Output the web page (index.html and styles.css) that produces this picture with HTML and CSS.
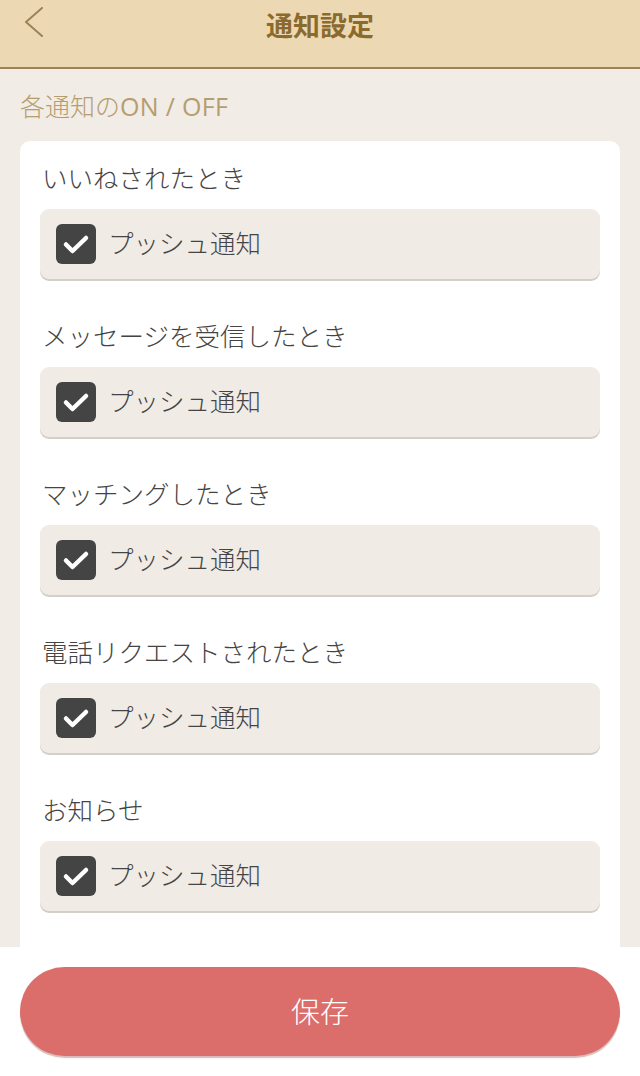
FILE: index.html
```html
<!DOCTYPE html>
<html lang="ja">
<head>
<meta charset="utf-8">
<title>通知設定</title>
<link rel="stylesheet" href="styles.css">
</head>
<body>
<div class="app">
  <header class="header">
    <button class="back" aria-label="戻る">
      <svg width="20" height="30" viewBox="0 0 20 30"><path d="M18 1 L2 15 L18 29" fill="none" stroke="#9a8259" stroke-width="2" stroke-linecap="round" stroke-linejoin="round"/></svg>
    </button>
    <h1 class="title">通知設定</h1>
  </header>
  <main class="main">
    <div class="caption">各通知の<span class="latin">ON / OFF</span></div>
    <div class="card">
      <section class="group">
        <div class="group-label">いいねされたとき</div>
        <label class="row"><span class="check"><svg width="40" height="40" viewBox="0 0 40 40"><path d="M10 20.5 L16.5 27 L30 14" fill="none" stroke="#fff" stroke-width="4.5" stroke-linecap="round" stroke-linejoin="round"/></svg></span><span class="row-text">プッシュ通知</span></label>
      </section>
      <section class="group">
        <div class="group-label">メッセージを受信したとき</div>
        <label class="row"><span class="check"><svg width="40" height="40" viewBox="0 0 40 40"><path d="M10 20.5 L16.5 27 L30 14" fill="none" stroke="#fff" stroke-width="4.5" stroke-linecap="round" stroke-linejoin="round"/></svg></span><span class="row-text">プッシュ通知</span></label>
      </section>
      <section class="group">
        <div class="group-label">マッチングしたとき</div>
        <label class="row"><span class="check"><svg width="40" height="40" viewBox="0 0 40 40"><path d="M10 20.5 L16.5 27 L30 14" fill="none" stroke="#fff" stroke-width="4.5" stroke-linecap="round" stroke-linejoin="round"/></svg></span><span class="row-text">プッシュ通知</span></label>
      </section>
      <section class="group">
        <div class="group-label">電話リクエストされたとき</div>
        <label class="row"><span class="check"><svg width="40" height="40" viewBox="0 0 40 40"><path d="M10 20.5 L16.5 27 L30 14" fill="none" stroke="#fff" stroke-width="4.5" stroke-linecap="round" stroke-linejoin="round"/></svg></span><span class="row-text">プッシュ通知</span></label>
      </section>
      <section class="group">
        <div class="group-label">お知らせ</div>
        <label class="row"><span class="check"><svg width="40" height="40" viewBox="0 0 40 40"><path d="M10 20.5 L16.5 27 L30 14" fill="none" stroke="#fff" stroke-width="4.5" stroke-linecap="round" stroke-linejoin="round"/></svg></span><span class="row-text">プッシュ通知</span></label>
      </section>
    </div>
  </main>
  <footer class="footer">
    <button class="save">保存</button>
  </footer>
</div>
</body>
</html>
```
FILE: styles.css
```css
* { box-sizing: border-box; }
html, body { margin: 0; padding: 0; }
body {
  font-family: "Noto Sans CJK JP", "Noto Sans", sans-serif;
  font-weight: 300;
  background: #f1ece6;
  color: #444;
}
.app {
  height: 1076px;
  display: flex;
  flex-direction: column;
  overflow: hidden;
}
.header {
  height: 69px;
  flex: none;
  background: #ecd9b3;
  border-bottom: 2px solid #9c8258;
  display: flex;
  align-items: flex-start;
  justify-content: center;
  position: relative;
}
.back {
  position: absolute;
  left: 23px;
  top: 7px;
  background: none;
  border: 0;
  padding: 0;
  width: 22px;
  height: 32px;
}
.title {
  margin: 0;
  padding-top: 5px;
  font-size: 27px;
  line-height: 40px;
  font-weight: 700;
  color: #8b6a2e;
}
.main {
  flex: 1;
  overflow: hidden;
  padding: 0 20px;
}
.caption {
  font-size: 25px;
  line-height: 36px;
  color: #b69d70;
  padding-top: 18px;
  height: 72px;
  white-space: nowrap;
}
.latin {
  font-family: "Open Sans", "Noto Sans", sans-serif;
  font-weight: 400;
  letter-spacing: 0.3px;
}
.card {
  background: #fff;
  border-radius: 10px 10px 0 0;
  padding: 18px 20px 60px;
}
.group { margin-bottom: 38px; }
.group-label {
  font-size: 25.5px;
  line-height: 36px;
  padding-left: 2px;
  color: #444;
  margin-bottom: 14px;
  white-space: nowrap;
}
.row {
  display: flex;
  align-items: center;
  height: 70px;
  background: #f0ebe5;
  border-radius: 9px;
  box-shadow: 0 2px 0 #d4cfc9;
  padding-left: 16px;
}
.check {
  width: 40px;
  height: 40px;
  border-radius: 6px;
  background: #444;
  display: flex;
  flex: none;
}
.row-text {
  margin-left: 12px;
  padding-bottom: 5px;
  font-size: 25.5px;
  line-height: 36px;
  color: #444;
  white-space: nowrap;
}
.footer {
  flex: none;
  height: 129px;
  background: #fff;
  padding: 20px 20px 0;
}
.save {
  display: block;
  width: 100%;
  height: 89px;
  border: 0;
  border-radius: 45px;
  background: #db6e6a;
  box-shadow: 0 2px 1px rgba(150, 60, 60, 0.35);
  color: #fff;
  font-family: "Noto Sans CJK JP", sans-serif;
  font-weight: 300;
  font-size: 29px;
  line-height: 36px;
  padding: 0 0 4px;
}
```
